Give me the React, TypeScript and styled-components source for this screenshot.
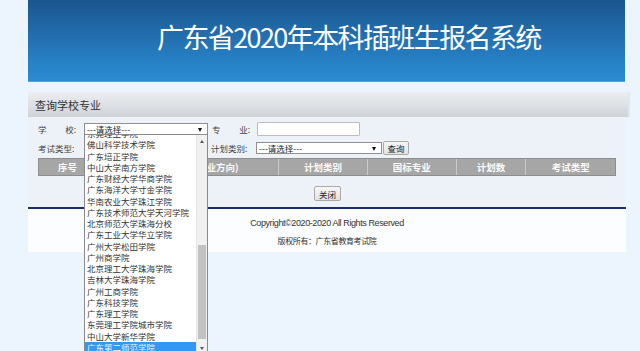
import React from 'react';
import styled, { createGlobalStyle } from 'styled-components';

const GlobalStyle = createGlobalStyle`
  html, body {
    margin: 0;
    padding: 0;
    background: #ecf5fe;
    font-family: "Noto Sans CJK SC", "Liberation Sans", sans-serif;
    color: #3a3a3a;
  }
`;

const schools = [
  '东莞理工学院',
  '佛山科学技术学院',
  '广东培正学院',
  '中山大学南方学院',
  '广东财经大学华商学院',
  '广东海洋大学寸金学院',
  '华南农业大学珠江学院',
  '广东技术师范大学天河学院',
  '北京师范大学珠海分校',
  '广东工业大学华立学院',
  '广州大学松田学院',
  '广州商学院',
  '北京理工大学珠海学院',
  '吉林大学珠海学院',
  '广州工商学院',
  '广东科技学院',
  '广东理工学院',
  '东莞理工学院城市学院',
  '中山大学新华学院',
  '广东第二师范学院',
];

const columns = [
  { label: '序号', width: 58 },
  { label: '院校专业名称(专业方向)', width: 183 },
  { label: '计划类别', width: 89 },
  { label: '国标专业', width: 89 },
  { label: '计划数', width: 70 },
  { label: '考试类型', width: 89 },
];

const App: React.FC = () => {
  return (
    <>
      <GlobalStyle />
      <Page>
        <Header>
          <Title>广东省2020年本科插班生报名系统</Title>
        </Header>

        <PanelBar>查询学校专业</PanelBar>
        <PanelBody>
          <FormRow>
            <Label>
              <span>学</span>
              <span>校:</span>
            </Label>
            <SelectWrap>
              <Select $width={124}>
                <span>---请选择---</span>
                <Caret />
              </Select>
              <Dropdown>
                <OptionList>
                  {schools.map((name, i) => (
                    <Option key={name} $selected={i === schools.length - 1}>
                      {name}
                    </Option>
                  ))}
                </OptionList>
                <ScrollTrack>
                  <ArrowUp />
                  <Thumb />
                  <ArrowDown />
                </ScrollTrack>
              </Dropdown>
            </SelectWrap>
            <Label $gap={4}>
              <span>专</span>
              <span>业:</span>
            </Label>
            <TextInput />
          </FormRow>

          <FormRow $top={3}>
            <Label>
              <span>考试类型:</span>
            </Label>
            <Select $width={124}>
              <span>---请选择---</span>
              <Caret />
            </Select>
            <Label $gap={3}>
              <span>计划类别:</span>
            </Label>
            <Select $width={126} $height={12}>
              <span>---请选择---</span>
              <Caret />
            </Select>
            <Button>查询</Button>
          </FormRow>

          <TableHead>
            {columns.map((c) => (
              <HeadCell key={c.label} $width={c.width}>
                {c.label}
              </HeadCell>
            ))}
          </TableHead>

          <CloseRow>
            <Button $width={27} $height={15}>关闭</Button>
          </CloseRow>
        </PanelBody>

        <Footer>
          <Copyright>Copyright©2020-2020 All Rights Reserved</Copyright>
          <Owner>版权所有：广东省教育考试院</Owner>
        </Footer>
      </Page>
    </>
  );
};

const Page = styled.div`
  width: 598px;
  margin-left: 28px;
  padding-bottom: 100px;
`;

const Header = styled.div`
  height: 82px;
  box-sizing: border-box;
  width: 597px;
  padding: 0 0 8px 129px;
  display: flex;
  align-items: center;
  background: linear-gradient(180deg, #1b558f 0%, #2169a8 35%, #2780c4 75%, #2b8bd3 100%);
  border-bottom: 1px solid #5aa3da;
`;

const Title = styled.h1`
  margin: 0;
  font-size: 27px;
  font-weight: 400;
  color: #ffffff;
  white-space: nowrap;
  letter-spacing: -1.6px;
`;

const PanelBar = styled.div`
  margin-top: 10px;
  margin-right: -4px;
  height: 25px;
  box-sizing: border-box;
  padding-left: 7px;
  display: flex;
  align-items: center;
  font-size: 11px;
  color: #333;
  background: linear-gradient(180deg, #eceef1 0%, #dcdfe3 55%, #cfd3d8 100%);
  border-right: 2px solid #e4e7ea;
`;

const PanelBody = styled.div`
  background: #edf2f8;
  padding: 4px 10px 6px;
`;

const FormRow = styled.div<{ $top?: number }>`
  display: flex;
  align-items: center;
  height: 16px;
  margin-top: ${(p) => p.$top ?? 0}px;
  font-size: 8.5px;
`;

const Label = styled.div<{ $gap?: number }>`
  width: 38px;
  margin-left: ${(p) => p.$gap ?? 0}px;
  margin-right: ${(p) => (p.$gap ? 7 : 8)}px;
  display: flex;
  justify-content: space-between;
  white-space: nowrap;
  color: #444;
  font-size: 8.5px;
`;

const SelectWrap = styled.div`
  position: relative;
`;

const Select = styled.div<{ $width: number; $height?: number }>`
  position: relative;
  width: ${(p) => p.$width}px;
  height: ${(p) => p.$height ?? 12}px;
  box-sizing: border-box;
  border: 1px solid #8f8f8f;
  background: #fff;
  display: flex;
  align-items: center;
  padding-left: 2px;
  font-size: 8.5px;
  color: #222;
  white-space: nowrap;
`;

const Caret = styled.span`
  position: absolute;
  right: 5px;
  top: 50%;
  margin-top: -1px;
  width: 0;
  height: 0;
  border-left: 2.5px solid transparent;
  border-right: 2.5px solid transparent;
  border-top: 4px solid #111;
`;

const Dropdown = styled.div`
  position: absolute;
  left: 0;
  top: 11px;
  width: 124px;
  height: 220px;
  box-sizing: border-box;
  border: 1px solid #8a8a8a;
  background: #fff;
  display: flex;
  overflow: hidden;
  z-index: 10;
`;

const OptionList = styled.div`
  flex: 1;
  margin-top: -7px;
`;

const Option = styled.div<{ $selected?: boolean }>`
  height: 11.25px;
  line-height: 11.25px;
  padding-left: 2px;
  font-size: 8.5px;
  white-space: nowrap;
  color: ${(p) => (p.$selected ? '#eaf4ff' : '#333')};
  background: ${(p) => (p.$selected ? '#3397f5' : 'transparent')};
`;

const ScrollTrack = styled.div`
  position: relative;
  width: 10px;
  background: #f1f1f1;
  border-left: 1px solid #e4e4e4;
`;

const Thumb = styled.div`
  position: absolute;
  left: 1px;
  right: 1px;
  top: 110px;
  height: 94px;
  background: #c2c2c2;
`;

const ArrowUp = styled.div`
  position: absolute;
  left: 3px;
  top: 5px;
  width: 0;
  height: 0;
  border-left: 2px solid transparent;
  border-right: 2px solid transparent;
  border-bottom: 3px solid #555;
`;

const ArrowDown = styled.div`
  position: absolute;
  left: 3px;
  top: 212px;
  width: 0;
  height: 0;
  border-left: 2px solid transparent;
  border-right: 2px solid transparent;
  border-top: 3px solid #555;
`;

const TextInput = styled.div`
  width: 103px;
  height: 14px;
  box-sizing: border-box;
  border: 1px solid #b9bcc0;
  border-radius: 1px;
  background: #fff;
`;

const Button = styled.div<{ $width?: number; $height?: number }>`
  width: ${(p) => p.$width ?? 26}px;
  height: ${(p) => p.$height ?? 14}px;
  box-sizing: border-box;
  margin-left: 1px;
  display: flex;
  align-items: center;
  justify-content: center;
  font-size: 8.5px;
  color: #222;
  background: linear-gradient(180deg, #f6f6f6, #e2e2e2);
  border: 1px solid #a9a9a9;
  border-radius: 2px;
`;

const TableHead = styled.div`
  display: flex;
  margin-top: 2px;
  height: 18px;
  border: 1px solid #8d8d8d;
  box-sizing: border-box;
  background: #a6a6a6;
`;

const HeadCell = styled.div<{ $width: number }>`
  width: ${(p) => p.$width}px;
  box-sizing: border-box;
  display: flex;
  align-items: center;
  justify-content: center;
  font-size: 9.5px;
  font-weight: 700;
  color: #fbfbfb;
  white-space: nowrap;
  border-right: 1px solid #cbcbcb;
  &:last-child {
    border-right: none;
  }
`;

const CloseRow = styled.div`
  display: flex;
  justify-content: center;
  margin-top: 10px;
`;

const Footer = styled.div`
  border-top: 2px solid #1b2d6c;
  background: #fbfdff;
  height: 45px;
  box-sizing: border-box;
  padding-top: 9px;
  display: flex;
  flex-direction: column;
  align-items: center;
  gap: 6px;
`;

const Copyright = styled.div`
  font-family: "Liberation Sans", Arial, sans-serif;
  font-size: 9px;
  letter-spacing: -0.4px;
  color: #333;
  line-height: 11px;
`;

const Owner = styled.div`
  font-size: 8px;
  letter-spacing: -0.4px;
  color: #333;
  line-height: 11px;
`;

export default App;
